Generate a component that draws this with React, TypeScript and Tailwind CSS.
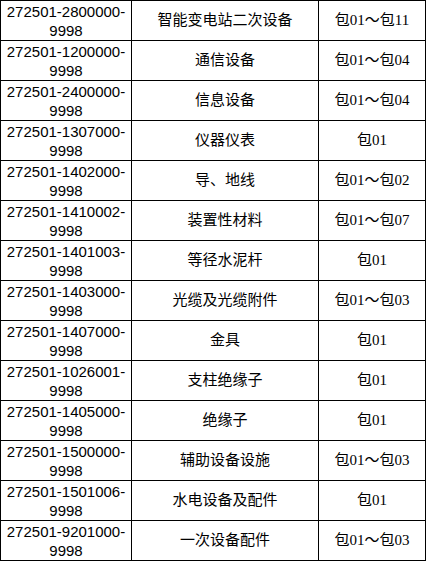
const ROWS = [
  ['272501-2800000-9998', '智能变电站二次设备', '包01～包11'],
  ['272501-1200000-9998', '通信设备', '包01～包04'],
  ['272501-2400000-9998', '信息设备', '包01～包04'],
  ['272501-1307000-9998', '仪器仪表', '包01'],
  ['272501-1402000-9998', '导、地线', '包01～包02'],
  ['272501-1410002-9998', '装置性材料', '包01～包07'],
  ['272501-1401003-9998', '等径水泥杆', '包01'],
  ['272501-1403000-9998', '光缆及光缆附件', '包01～包03'],
  ['272501-1407000-9998', '金具', '包01'],
  ['272501-1026001-9998', '支柱绝缘子', '包01'],
  ['272501-1405000-9998', '绝缘子', '包01'],
  ['272501-1500000-9998', '辅助设备设施', '包01～包03'],
  ['272501-1501006-9998', '水电设备及配件', '包01'],
  ['272501-9201000-9998', '一次设备配件', '包01～包03'],
]

export default function App() {
  return (
    <div className="w-[426px] bg-white text-black font-['Liberation_Sans','Noto_Sans_CJK_SC',sans-serif]">
      {/* black background shows through the 1px gaps as cell borders */}
      <div className="grid grid-cols-[130px_186px_106px] auto-rows-[39px] gap-px bg-black p-px">
        {ROWS.map(([code, name, pkg]) => (
          <div key={code} className="contents">
            <div className="bg-white flex items-center justify-center text-center text-[15px] leading-[19px] px-1">
              {code.replace(/-(\d{4})$/, '-\u200B$1')}
            </div>
            <div className="bg-white flex items-center justify-center text-[15px]">{name}</div>
            <div className="bg-white flex items-center justify-center text-[15px] font-['Liberation_Serif','Noto_Sans_CJK_SC',serif]">
              {pkg}
            </div>
          </div>
        ))}
      </div>
    </div>
  )
}
